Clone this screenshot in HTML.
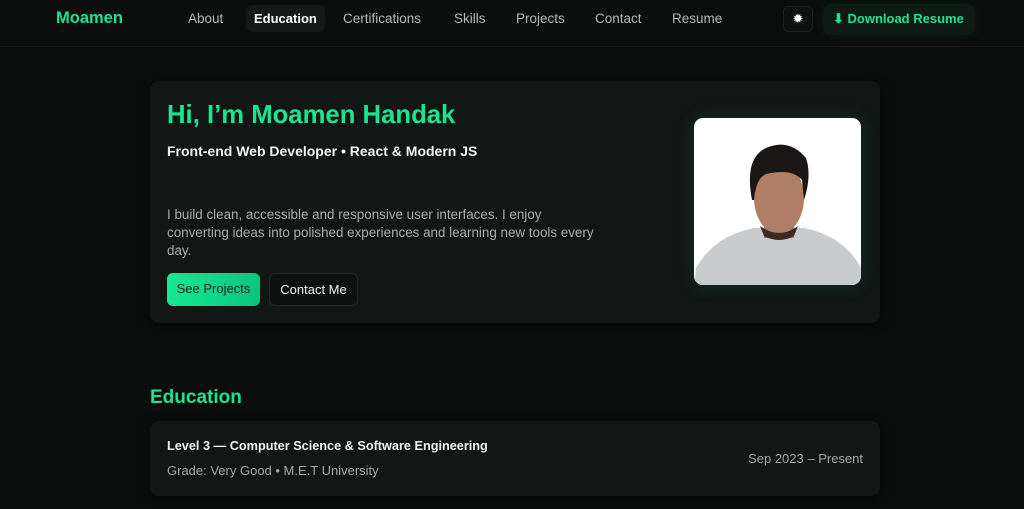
<!DOCTYPE html>
<html><head><meta charset="utf-8"><style>
*{margin:0;padding:0;box-sizing:border-box}
body{width:1024px;height:509px;overflow:hidden;background:#0b0c0c;font-family:"Liberation Sans",sans-serif;color:#e8e8e8;position:relative}
.hdr{position:absolute;top:0;left:0;width:1024px;height:47px;border-bottom:1px solid #161a19;background:#0c0d0d}
.logo{position:absolute;left:56px;top:9px;font-size:16.5px;font-weight:bold;color:#19e58f}
.nav a{position:absolute;top:11px;font-size:13.5px;color:#b5b8b7;text-decoration:none}
.nav .act{background:#141a18;color:#fff;font-weight:bold;padding:6px 8px;top:5px;border-radius:6px;font-size:13px}
.gear{position:absolute;left:783px;top:6px;width:30px;height:26px;border:1px solid #1d2321;border-radius:6px;color:#fff;text-align:center;font-size:13px;line-height:24px;background:#0f1111}
.dl{position:absolute;left:823px;top:4px;width:152px;height:31px;border-radius:8px;background:#0f1a15;color:#19e58f;font-weight:bold;font-size:13px;line-height:30px;padding-left:10px;box-shadow:0 0 12px rgba(25,229,143,.08)}
.card{position:absolute;background:#121615;border-radius:9px;box-shadow:0 2px 10px rgba(0,0,0,.5)}
h1{position:absolute;left:17px;top:20px;font-size:25.7px;color:#19e58f;font-weight:bold}
.sub{position:absolute;left:17px;top:62px;font-size:14px;font-weight:bold;color:#f2f2f2}
.p{position:absolute;left:17px;top:125px;width:500px;font-size:13.4px;line-height:18px;color:#a9adac;white-space:nowrap}
.b1{position:absolute;left:17px;top:192px;width:93px;height:33px;border-radius:6px;background:linear-gradient(90deg,#15e895,#0bc57d);color:#10241b;font-size:13px;line-height:31px;text-align:center}
.b2{position:absolute;left:119px;top:192px;width:89px;height:33px;border-radius:6px;border:1px solid #222826;background:#0e1110;color:#f2f2f2;font-size:13px;line-height:31px;text-align:center}
.photo{position:absolute;left:544px;top:37px;width:167px;height:167px;border-radius:9px;background:#fff;overflow:hidden;box-shadow:0 0 22px rgba(25,229,143,.12)}
h2{position:absolute;left:150px;top:387px;font-size:19px;color:#19e58f;font-weight:bold}
</style></head><body>
<div class="hdr">
<div class="logo">Moamen</div>
<div class="nav">
<a style="left:188px">About</a>
<a class="act" style="left:246px">Education</a>
<a style="left:343px">Certifications</a>
<a style="left:454px">Skills</a>
<a style="left:516px">Projects</a>
<a style="left:595px">Contact</a>
<a style="left:672px">Resume</a>
</div>
<div class="gear">✹</div>
<div class="dl">⬇ Download Resume</div>
</div>
<div class="card" style="left:150px;top:81px;width:730px;height:242px">
<h1>Hi, I’m Moamen Handak</h1>
<div class="sub">Front-end Web Developer • React &amp; Modern JS</div>
<div class="p">I build clean, accessible and responsive user interfaces. I enjoy<br>converting ideas into polished experiences and learning new tools every<br>day.</div>
<div class="b1">See Projects</div>
<div class="b2">Contact Me</div>
<div class="photo"><svg width="167" height="167" viewBox="0 0 167 167">
<path d="M0 167 L2 150 Q20 118 60 110 L110 110 Q150 118 167 150 L167 167Z" fill="#c9ccce"/>
<rect x="70" y="95" width="30" height="25" fill="#a6705a"/>
<ellipse cx="85" cy="80" rx="25" ry="36" fill="#b07d66"/>
<path d="M58 82 Q50 40 72 30 Q95 20 112 40 Q118 58 110 82 L108 62 Q98 50 72 56 Q62 60 60 82Z" fill="#1b1716"/>
<path d="M66 108 Q85 122 104 108 L100 118 Q85 126 70 118Z" fill="#3c2a24"/>
</svg></div>
</div>
<h2>Education</h2>
<div class="card" style="left:150px;top:421px;width:730px;height:75px">
<div style="position:absolute;left:17px;top:18px;font-size:12.7px;font-weight:bold;color:#f2f2f2">Level 3 — Computer Science &amp; Software Engineering</div>
<div style="position:absolute;left:17px;top:42px;font-size:13px;color:#a3a7a6">Grade: Very Good • M.E.T University</div>
<div style="position:absolute;right:17px;top:30px;font-size:13px;color:#a3a7a6">Sep 2023 – Present</div>
</div>
</body></html>
